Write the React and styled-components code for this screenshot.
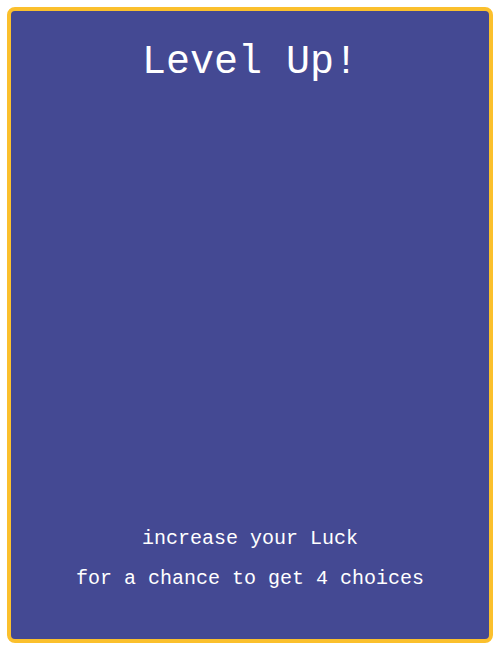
import React from "react";
import styled, { createGlobalStyle } from "styled-components";

function App() {
  return (
    <>
      <GlobalResets />
      <Card>
        <Title>Level Up!</Title>
        <Footer>
          <Hint>increase your Luck</Hint>
          <Hint>for a chance to get 4 choices</Hint>
        </Footer>
      </Card>
    </>
  );
}

const GlobalResets = createGlobalStyle`
  * {
    box-sizing: border-box;
    margin: 0;
    padding: 0;
  }
  body {
    background: #ffffff;
    font-family: "Courier New", "Liberation Mono", monospace;
  }
`;

const Card = styled.div`
  margin: 7px;
  width: 486px;
  height: 636px;
  background-color: #444993;
  border: 4px solid #fbc02d;
  border-radius: 8px;
  color: #ffffff;
  display: flex;
  flex-direction: column;
  justify-content: space-between;
  align-items: center;
`;

const Title = styled.h1`
  margin-top: 29px;
  font-size: 40px;
  font-weight: 400;
  line-height: 46px;
`;

const Footer = styled.div`
  display: flex;
  flex-direction: column;
  align-items: center;
  padding-bottom: 40px;
`;

const Hint = styled.p`
  font-size: 20px;
  line-height: 40px;
`;

export default App;
